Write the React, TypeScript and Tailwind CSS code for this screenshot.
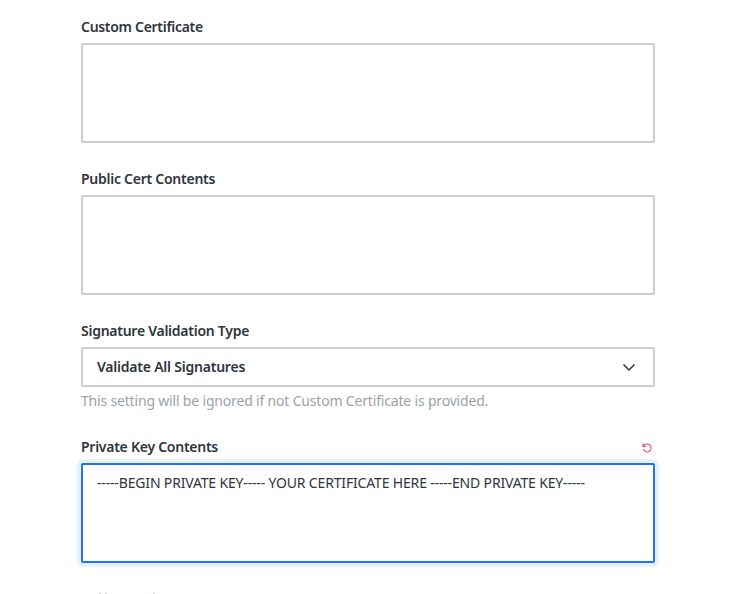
import React from "react";

function Label({ children, className }: { children: React.ReactNode; className: string }) {
  return <div className={`w-fit whitespace-nowrap text-sm leading-5 font-semibold ${className}`}>{children}</div>;
}

export default function App() {
  return (
    <main className="h-[594px] w-[730px] overflow-hidden bg-white pt-[17px] pl-[81px] font-['Noto_Sans',sans-serif] text-[#2f343d]">
      <form className="flex w-[574px] flex-col">
        <section className="h-[152px]">
          <Label className="tracking-[-0.3px]">Custom Certificate</Label>
          <div className="mt-[6px] h-[100px] rounded-[2px] border-2 border-[#cbced1]" />
        </section>
        <section className="h-[152px]">
          <Label className="tracking-[-0.26px]">Public Cert Contents</Label>
          <div className="mt-[6px] h-[100px] rounded-[2px] border-2 border-[#cbced1]" />
        </section>
        <section className="h-[116px]">
          <Label className="tracking-[-0.26px]">Signature Validation Type</Label>
          <div className="mt-[6px] flex h-10 items-center justify-between rounded-[2px] border-2 border-[#cbced1] pr-[17px] pl-[14px]">
            <Label className="tracking-[-0.22px]">Validate All Signatures</Label>
            <svg width="14" height="10" viewBox="0 0 14 10" fill="none" stroke="#2f343d" strokeWidth="1.5">
              <path d="M1.5 2.5 7 8l5.500-5.500" />
            </svg>
          </div>
          <p className="mt-1 w-fit whitespace-nowrap text-sm leading-5 tracking-[-0.18px] text-[#9ea2a8]">
            This setting will be ignored if not Custom Certificate is provided.
          </p>
        </section>
        <section className="h-[152px]">
          <div className="flex items-center justify-between pr-[3px]">
            <Label className="tracking-[-0.26px]">Private Key Contents</Label>
            <svg className="mt-[2px]" width="10" height="10" viewBox="0 0 10 10" fill="none" stroke="#f5455c" strokeWidth="1.1">
              <path d="M1 .5v3h3M1.500 3.200A4 4 0 1 1 1.300 6.200" />
            </svg>
          </div>
          <div className="mt-[6px] h-[100px] rounded-[2px] border-2 border-[#1d74f5] px-[14px] py-2 shadow-[0_0_0_4px_#e8f2ff]">
            <div className="w-fit whitespace-nowrap text-sm leading-5 tracking-[-0.165px]">
              -----BEGIN PRIVATE KEY----- YOUR CERTIFICATE HERE -----END PRIVATE KEY-----
            </div>
          </div>
        </section>
        <div className="mt-1 flex h-px pl-[18px]">
          <span className="h-px w-[2px] bg-[#c5c6c9]" />
          <span className="ml-[4px] h-px w-[2px] bg-[#c5c6c9]" />
          <span className="ml-[46px] h-px w-[2px] bg-[#d5c6c9]" />
        </div>
      </form>
    </main>
  );
}
